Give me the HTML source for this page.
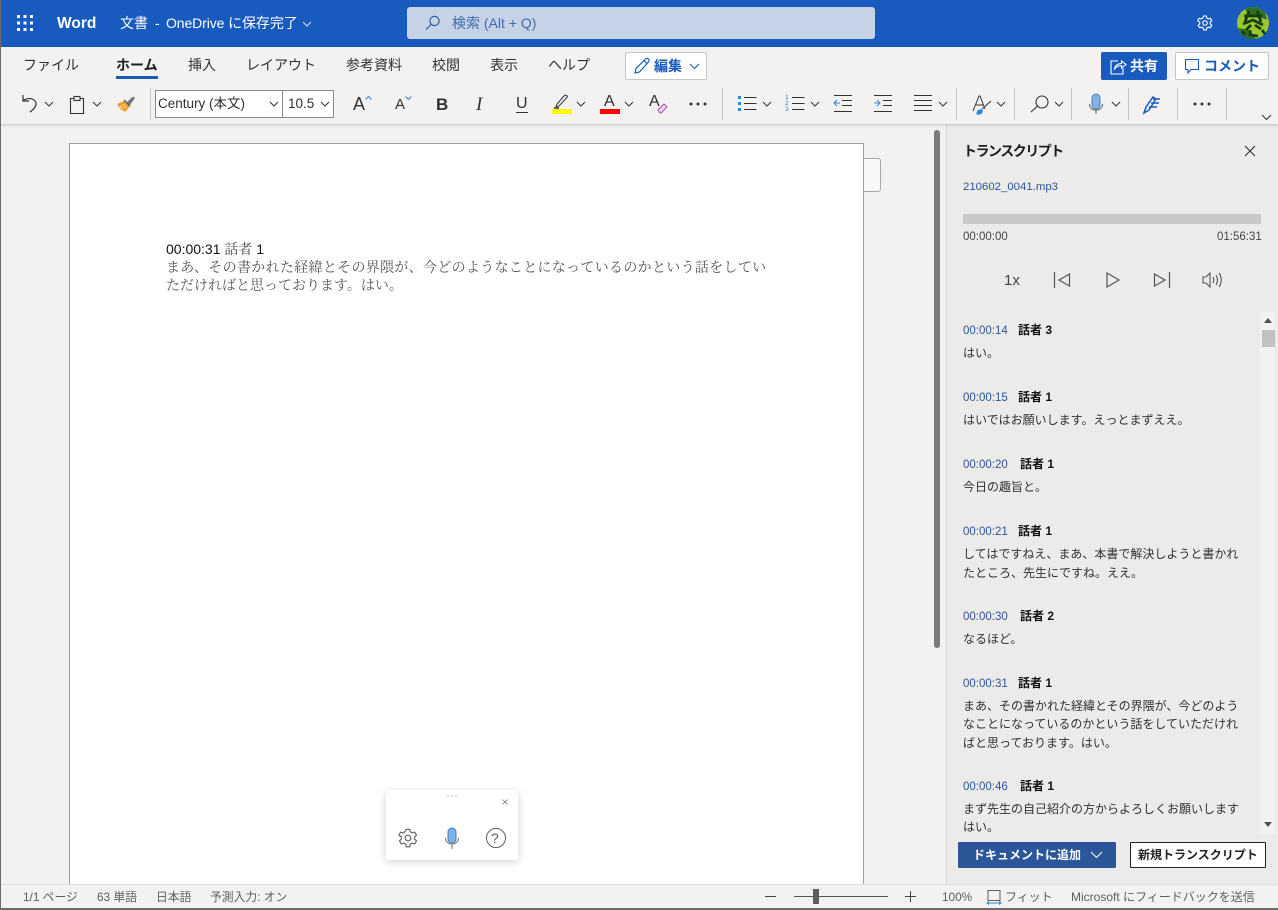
<!DOCTYPE html>
<html lang="ja"><head><meta charset="utf-8"><title>Word</title>
<style>
html,body{margin:0;padding:0;background:#f3f2f1}
body{width:1278px;height:910px;position:relative;overflow:hidden;font-family:"Liberation Sans","Noto Sans CJK JP",sans-serif;color:#323130}
.a{position:absolute;white-space:nowrap;line-height:1}
.b{position:absolute}
svg{position:absolute;overflow:visible}
.t{font-size:14px;color:#323130}
.sep{position:absolute;top:88px;width:1px;height:32px;background:#c8c6c4}
.ts{font-size:11.5px;color:#2b579a;margin-top:1px}
.sp{font-size:12px;color:#111;font-weight:bold}
.tx{font-size:12px;color:#323130}
.st{font-size:11.8px;color:#605e5c;margin-top:1px}
</style></head><body>
<!-- header -->
<div class="b" style="left:0;top:0;width:1278px;height:47px;background:#185abd"></div>
<svg style="left:17px;top:15px" width="16" height="16" fill="#fff"><rect x="0" y="0" width="3" height="3"/><rect x="6.5" y="0" width="3" height="3"/><rect x="13" y="0" width="3" height="3"/><rect x="0" y="6.5" width="3" height="3"/><rect x="6.5" y="6.5" width="3" height="3"/><rect x="13" y="6.5" width="3" height="3"/><rect x="0" y="13" width="3" height="3"/><rect x="6.5" y="13" width="3" height="3"/><rect x="13" y="13" width="3" height="3"/></svg>
<div class="a" style="left:57px;top:16px;font-size:15.5px;font-weight:bold;color:#fff">Word</div>
<div class="a" style="left:120px;top:16px;font-size:14px;color:#fff">文書</div>
<div class="a" style="left:155px;top:16px;font-size:14px;color:#fff">-</div>
<div class="a" style="left:166px;top:16px;font-size:14px;color:#fff;letter-spacing:-.1px">OneDrive に保存完了</div>
<svg style="left:302px;top:21px" width="10" height="6" fill="none" stroke="#dfe8f7"><path d="M1 1l4 4 4-4"/></svg>
<div class="b" style="left:407px;top:7px;width:468px;height:32px;background:#c6d3e6;border-radius:3px"></div>
<svg style="left:425px;top:15px" width="16" height="16" fill="none" stroke="#2b5ea8" stroke-width="1.2"><circle cx="9.5" cy="6" r="4.6"/><path d="M6 9.5L1 14.5"/></svg>
<div class="a" style="left:452px;top:16px;font-size:14px;color:#3d6bb0">検索 (Alt + Q)</div>
<svg style="left:1197px;top:15px" width="16" height="16" viewBox="0 0 16 16" fill="none" stroke="#fff" stroke-width="1.1"><path d="M6.6 1h2.8l.4 2 1.6.9 2-.6 1.400 2.400-1.500 1.400v1.800l1.500 1.400-1.400 2.400-2-.6-1.600.9-.4 2H6.600l-.4-2-1.600-.9-2 .6-1.400-2.400 1.500-1.400V7.100L.7 5.700l1.400-2.400 2 .6 1.600-.9z"/><circle cx="8" cy="8" r="2.300"/></svg>
<svg style="left:1237px;top:7px" width="32" height="32" viewBox="0 0 32 32"><circle cx="16" cy="16" r="16" fill="#9cc62c"/><path d="M8 2.100a16 16 0 0 1 20 3.400l2 7L12 8z" fill="#2f6f1f"/><path d="M1 21l12 2 6 9h-7A16 16 0 0 1 1 21z" fill="#2f6f1f"/><g fill="none" stroke="#143f12" stroke-width="2.800"><path d="M7 9h18M12 4l-4 11M20 4l4 11M6 17l10-4 10 5M14 18l-5 5M18 18l6 4M5 24l3 4M13 23v5l8 1M25 23l3 4"/></g></svg>
<!-- ribbon -->
<div class="b" style="left:0;top:47px;width:1278px;height:77px;background:#f3f2f1;box-shadow:0 1px 3px rgba(0,0,0,.2);z-index:1"></div>
<div style="position:absolute;left:0;top:0;width:1278px;height:125px;z-index:2">
<div class="a t" style="left:23px;top:58px">ファイル</div>
<div class="a t" style="left:116px;top:58px;font-weight:bold;color:#201f1e">ホーム</div>
<div class="b" style="left:116px;top:76px;width:42px;height:3px;background:#185abd"></div>
<div class="a t" style="left:188px;top:58px">挿入</div>
<div class="a t" style="left:246px;top:58px">レイアウト</div>
<div class="a t" style="left:346px;top:58px">参考資料</div>
<div class="a t" style="left:432px;top:58px">校閲</div>
<div class="a t" style="left:490px;top:58px">表示</div>
<div class="a t" style="left:548px;top:58px">ヘルプ</div>
<div class="b" style="left:625px;top:52px;width:80px;height:26px;background:#fff;border:1px solid #c8c6c4;border-radius:2px"></div>
<svg style="left:634px;top:57px" width="17" height="17" fill="none" stroke="#185abd" stroke-width="1.200"><path d="M1 16l1-4.500L11.500 2a1.700 1.700 0 0 1 3 3L5.500 15z"/><path d="M10 3.500l3 3"/></svg>
<div class="a" style="left:654px;top:59px;font-size:14px;font-weight:bold;color:#185abd">編集</div>
<svg style="left:689px;top:63px" width="11" height="7" fill="none" stroke="#185abd" stroke-width="1.100"><path d="M1 1l4.500 4.500L10 1"/></svg>
<div class="b" style="left:1101px;top:52px;width:66px;height:28px;background:#185abd;border-radius:2px"></div>
<svg style="left:1110px;top:58px" width="17" height="17" fill="none" stroke="#fff" stroke-width="1.100"><path d="M8 3H1v13h12v-6"/><path d="M4.500 11c.5-3.500 3.500-5.500 7-5.500V3L16 6.500 11.500 10V7.500c-3 0-5 1-7 3.500z"/></svg>
<div class="a" style="left:1130px;top:59px;font-size:14px;font-weight:bold;color:#fff">共有</div>
<div class="b" style="left:1175px;top:52px;width:92px;height:26px;background:#fff;border:1px solid #c8c6c4;border-radius:2px"></div>
<svg style="left:1185px;top:59px" width="15" height="15" fill="none" stroke="#185abd" stroke-width="1.100"><path d="M.5.500h13v10H6L3 14v-3.500H.5z"/></svg>
<div class="a" style="left:1204px;top:59px;font-size:14px;font-weight:bold;color:#185abd">コメント</div>
<!-- toolbar -->
<svg style="left:20px;top:94px" width="20" height="20" fill="none" stroke="#323130" stroke-width="1.200"><path d="M3 1v6h6"/><path d="M3 7c3-3 9-3.500 12 0 2.500 3 .5 7-5 11"/></svg>
<svg style="left:44px;top:101px" width="10" height="6" fill="none" stroke="#323130"><path d="M1 1l4 4 4-4"/></svg>
<svg style="left:70px;top:96px" width="15" height="18" fill="none" stroke="#323130" stroke-width="1.100"><path d="M4 2.500H.5v15h13v-15H10"/><rect x="4" y=".5" width="6" height="4" fill="#f3f2f1"/></svg>
<svg style="left:92px;top:101px" width="10" height="6" fill="none" stroke="#323130"><path d="M1 1l4 4 4-4"/></svg>
<svg style="left:117px;top:96px" width="18" height="16"><path d="M0 8l7-3 6 5-4 5.500C5 15.500 2 12 0 8z" fill="#f0a030"/><path d="M3 10l3 3M6 8l3 4" stroke="#fbe2b8"/><path d="M10 6l6-5.500 2 1.500-5 7z" fill="#797775"/><path d="M7 4l6 6" stroke="#605e5c" stroke-width="1.500"/></svg>
<div class="sep" style="left:150px"></div>
<div class="b" style="left:155px;top:90px;width:128px;height:28px;background:#fff;border:1px solid #8a8886;box-sizing:border-box"></div>
<div class="b" style="left:282px;top:90px;width:52px;height:28px;background:#fff;border:1px solid #8a8886;box-sizing:border-box"></div>
<div class="a" style="left:158px;top:97px;font-size:13.5px;color:#323130">Century (本文)</div>
<svg style="left:269px;top:101px" width="10" height="6" fill="none" stroke="#323130"><path d="M1 1l4 4 4-4"/></svg>
<div class="a" style="left:288px;top:97px;font-size:13.5px;color:#323130">10.5</div>
<svg style="left:320px;top:101px" width="10" height="6" fill="none" stroke="#323130"><path d="M1 1l4 4 4-4"/></svg>
<div class="a" style="left:353px;top:95px;font-size:18px;color:#323130">A</div>
<svg style="left:365px;top:96px" width="7" height="4" fill="none" stroke="#2b88d8"><path d="M.5 3.500l3-3 3 3"/></svg>
<div class="a" style="left:395px;top:97px;font-size:15px;color:#323130">A</div>
<svg style="left:405px;top:96px" width="7" height="4" fill="none" stroke="#2b88d8"><path d="M.5.500l3 3 3-3"/></svg>
<div class="a" style="left:436px;top:96px;font-size:17px;font-weight:bold;color:#323130">B</div>
<div class="a" style="left:476px;top:95px;font-size:19px;font-family:'Liberation Serif',serif;font-style:italic;color:#323130">I</div>
<div class="a" style="left:516px;top:96px;font-size:16px;color:#323130">U</div>
<div class="b" style="left:516px;top:112px;width:12px;height:1px;background:#323130"></div>
<svg style="left:553px;top:94px" width="18" height="15" fill="none" stroke="#323130"><path d="M3 13l1-3 7-8c2-2 4 0 3 1.500L6 12z"/><path d="M1 14h5" stroke="#605e5c" stroke-width="2"/></svg>
<div class="b" style="left:552px;top:109px;width:20px;height:5px;background:#ffff00"></div>
<svg style="left:576px;top:101px" width="10" height="6" fill="none" stroke="#323130"><path d="M1 1l4 4 4-4"/></svg>
<div class="a" style="left:604px;top:94px;font-size:16px;color:#323130">A</div>
<div class="b" style="left:600px;top:109px;width:20px;height:5px;background:#f00"></div>
<svg style="left:624px;top:101px" width="10" height="6" fill="none" stroke="#323130"><path d="M1 1l4 4 4-4"/></svg>
<div class="a" style="left:649px;top:94px;font-size:16px;color:#323130">A</div>
<svg style="left:657px;top:103px" width="11" height="11" fill="#f3d9f3" stroke="#b146c2"><path d="M1 7l6-6 3 3-6 6H3z"/></svg>
<svg style="left:689px;top:102px" width="18" height="4" fill="#323130"><circle cx="2" cy="2" r="1.500"/><circle cx="9" cy="2" r="1.500"/><circle cx="16" cy="2" r="1.500"/></svg>
<div class="sep" style="left:722px"></div>
<svg style="left:738px;top:96px" width="19" height="16"><rect x="0" y="0" width="3" height="3" fill="#2b88d8"/><rect x="0" y="6" width="3" height="3" fill="#2b88d8"/><rect x="0" y="12" width="3" height="3" fill="#2b88d8"/><path d="M6 1.500h12.500M6 7.500h12.500M6 13.500h12.500" stroke="#323130"/></svg>
<svg style="left:762px;top:101px" width="10" height="6" fill="none" stroke="#323130"><path d="M1 1l4 4 4-4"/></svg>
<div class="a" style="left:785px;top:95px;font-size:6.500px;color:#2b88d8;line-height:6px;white-space:normal;width:6px">1<br>2<br>3</div>
<svg style="left:792px;top:96px" width="13" height="16"><path d="M0 1.500h12.500M0 7.500h12.500M0 13.500h12.500" stroke="#323130"/></svg>
<svg style="left:810px;top:101px" width="10" height="6" fill="none" stroke="#323130"><path d="M1 1l4 4 4-4"/></svg>
<svg style="left:834px;top:95px" width="19" height="18" fill="none" stroke="#323130"><path d="M0 .5h18M8 5.500h10M8 10.500h10M0 16.500h18"/><path d="M6 8H0M3 5L0 8l3 3" stroke="#2b88d8"/></svg>
<svg style="left:874px;top:95px" width="19" height="18" fill="none" stroke="#323130"><path d="M0 .5h18M9 5.500h9M9 10.500h9M0 16.500h18"/><path d="M0 8h6M3 5l3 3-3 3" stroke="#2b88d8"/></svg>
<svg style="left:914px;top:95px" width="19" height="17" fill="none" stroke="#323130"><path d="M0 .5h18M0 5.500h18M0 10.500h18M0 15.500h18"/></svg>
<svg style="left:938px;top:101px" width="10" height="6" fill="none" stroke="#323130"><path d="M1 1l4 4 4-4"/></svg>
<div class="sep" style="left:956px"></div>
<svg style="left:973px;top:95px" width="20" height="20" fill="none" stroke="#323130"><path d="M0 16L6 1h1l5 13M3 10h7"/><path d="M4 19c0-3 2-5 5-4 1 3-2 5-5 4z" fill="#2b88d8" stroke="#2b88d8"/><path d="M9 14L18 6" stroke="#605e5c" stroke-width="1.400"/></svg>
<svg style="left:996px;top:101px" width="10" height="6" fill="none" stroke="#323130"><path d="M1 1l4 4 4-4"/></svg>
<div class="sep" style="left:1014px"></div>
<svg style="left:1030px;top:95px" width="20" height="18" fill="none" stroke="#323130" stroke-width="1.100"><circle cx="12" cy="7" r="6"/><path d="M7.500 11L1 17"/></svg>
<svg style="left:1054px;top:101px" width="10" height="6" fill="none" stroke="#323130"><path d="M1 1l4 4 4-4"/></svg>
<div class="sep" style="left:1071px"></div>
<svg style="left:1089px;top:94px" width="14" height="20"><rect x="3" y="0" width="8" height="15" rx="4" fill="#7fb2e5" stroke="#4a86c8"/><path d="M.5 10c0 8 13 8 13 0M7 16v4" fill="none" stroke="#797775" stroke-width="1.200"/></svg>
<svg style="left:1111px;top:101px" width="10" height="6" fill="none" stroke="#323130"><path d="M1 1l4 4 4-4"/></svg>
<div class="sep" style="left:1128px"></div>
<svg style="left:1143px;top:95px" width="20" height="20" fill="none" stroke="#185abd" stroke-width="1.500"><path d="M1 18l2-6 7-10 3 2-7 11z"/><path d="M10 4h7M8 8h8M6 12h8"/></svg>
<div class="sep" style="left:1177px"></div>
<svg style="left:1193px;top:102px" width="18" height="4" fill="#323130"><circle cx="2" cy="2" r="1.500"/><circle cx="9" cy="2" r="1.500"/><circle cx="16" cy="2" r="1.500"/></svg>
<div class="sep" style="left:1226px"></div>
<svg style="left:1261px;top:114px" width="11" height="7" fill="none" stroke="#323130"><path d="M1 1l4.500 4.500L10 1"/></svg>
</div>
<!-- doc area -->
<div class="b" style="left:862px;top:158px;width:17px;height:32px;background:#f8f8f8;border:1px solid #a8a8a8;border-radius:0 3px 3px 0"></div>
<div class="b" style="left:69px;top:143px;width:793px;height:741px;background:#fff;border:1px solid #a0a0a0;border-bottom:0"></div>
<div class="a" style="left:166px;top:242px;font-size:14px;color:#111">00:00:31 <span style="font-family:'Noto Serif CJK SC',serif;color:#444">話者</span> 1</div>
<div class="a" style="left:166px;top:260px;font-size:14px;font-family:'Noto Serif CJK SC',serif;color:#555;letter-spacing:.31px">まあ、その書かれた経緯とその界隈が、今どのようなことになっているのかという話をしてい</div>
<div class="a" style="left:166px;top:278px;font-size:14px;font-family:'Noto Serif CJK SC',serif;color:#555">ただければと思っております。はい。</div>
<div class="b" style="left:934px;top:130px;width:6px;height:518px;background:#7a7a7a;border-radius:3px"></div>
<div class="b" style="left:386px;top:790px;width:132px;height:70px;background:#fff;border-radius:2px;box-shadow:0 2px 8px rgba(0,0,0,.18)"></div>
<svg style="left:447px;top:795px" width="10" height="2" fill="#b0b0b0"><circle cx="1" cy="1" r=".7"/><circle cx="5" cy="1" r=".7"/><circle cx="9" cy="1" r=".7"/></svg>
<svg style="left:502px;top:799px" width="6" height="6" stroke="#777" stroke-width=".8"><path d="M.5.500l5 5M5.500.500l-5 5"/></svg>
<svg style="left:398px;top:828px" width="20" height="20" viewBox="0 0 16 16" fill="none" stroke="#605e5c" stroke-width=".9"><path d="M6.600 1h2.800l.4 2 1.600.9 2-.6 1.400 2.400-1.500 1.400v1.800l1.500 1.400-1.400 2.400-2-.6-1.600.9-.4 2H6.600l-.4-2-1.600-.9-2 .6-1.400-2.400 1.500-1.400V7.100L.7 5.700l1.400-2.400 2 .6 1.600-.9z"/><circle cx="8" cy="8" r="2.300"/></svg>
<svg style="left:445px;top:828px" width="14" height="21"><rect x="3" y="0" width="8" height="15" rx="4" fill="#7fb2e5" stroke="#3f7fc4"/><path d="M.5 10c0 8 13 8 13 0M7 16v5" fill="none" stroke="#8a8886" stroke-width="1.200"/></svg>
<svg style="left:486px;top:828px" width="20" height="20"><circle cx="10" cy="10" r="9.500" fill="none" stroke="#605e5c"/></svg>
<div class="a" style="left:491px;top:831px;font-size:14px;color:#605e5c">?</div>
<!-- panel -->
<div class="b" style="left:946px;top:124px;width:332px;height:760px;background:#edebe9;border-left:1px solid #d6d4d2;box-sizing:border-box"></div>
<div class="a" style="left:963px;top:144px;font-size:14px;font-weight:bold;color:#201f1e;letter-spacing:-1.500px">トランスクリプト</div>
<svg style="left:1244px;top:145px" width="12" height="12" stroke="#323130" stroke-width="1.100"><path d="M1 1l10 10M11 1L1 11"/></svg>
<div class="a" style="left:963px;top:182px;font-size:11.4px;color:#2b579a">210602_0041.mp3</div>
<div class="b" style="left:963px;top:214px;width:298px;height:10px;background:#c8c8c8"></div>
<div class="a" style="left:963px;top:232px;font-size:11.5px;color:#444">00:00:00</div>
<div class="a" style="left:1217px;top:232px;font-size:11.5px;color:#444">01:56:31</div>
<div class="a" style="left:1004px;top:273px;font-size:15px;color:#444">1x</div>
<svg style="left:1053px;top:272px" width="18" height="16" fill="none" stroke="#555" stroke-width="1.200"><path d="M1.500 0v16M16.500 2v12L6 8z"/></svg>
<svg style="left:1106px;top:272px" width="14" height="16" fill="none" stroke="#555" stroke-width="1.200"><path d="M1 1v14l12-7z"/></svg>
<svg style="left:1153px;top:272px" width="18" height="16" fill="none" stroke="#555" stroke-width="1.200"><path d="M16.500 0v16M1.500 2v12L12 8z"/></svg>
<svg style="left:1202px;top:271px" width="21" height="18" fill="none" stroke="#555" stroke-width="1.100"><path d="M1 6v6h3l4 4V2L4 6zM11 6c1 2 1 4 0 6M14 4c2 3 2 7 0 10M17 2c3 4 3 10 0 14"/></svg>
<div class="b" style="left:1260px;top:312px;width:15px;height:522px;background:#f1f1f1"></div>
<svg style="left:1264px;top:318px" width="8" height="5" fill="#505050"><path d="M4 0l4 5H0z"/></svg>
<svg style="left:1264px;top:822px" width="8" height="5" fill="#505050"><path d="M0 0h8L4 5z"/></svg>
<div class="b" style="left:1262px;top:330px;width:13px;height:17px;background:#c1c1c1"></div>
<div class="a ts" style="left:963px;top:325px">00:00:14</div><div class="a sp" style="left:1018px;top:324px">話者 3</div><div class="a tx" style="left:963px;top:347px">はい。</div>
<div class="a ts" style="left:963px;top:392px">00:00:15</div><div class="a sp" style="left:1018px;top:391px">話者 1</div><div class="a tx" style="left:963px;top:414px">はいではお願いします。えっとまずええ。</div>
<div class="a ts" style="left:963px;top:459px">00:00:20</div><div class="a sp" style="left:1020px;top:458px">話者 1</div><div class="a tx" style="left:963px;top:481px">今日の趣旨と。</div>
<div class="a ts" style="left:963px;top:526px">00:00:21</div><div class="a sp" style="left:1018px;top:525px">話者 1</div><div class="a tx" style="left:963px;top:548px">してはですねえ、まあ、本書で解決しようと書かれ</div><div class="a tx" style="left:963px;top:567px">たところ、先生にですね。ええ。</div>
<div class="a ts" style="left:963px;top:611px">00:00:30</div><div class="a sp" style="left:1020px;top:610px">話者 2</div><div class="a tx" style="left:963px;top:633px">なるほど。</div>
<div class="a ts" style="left:963px;top:678px">00:00:31</div><div class="a sp" style="left:1018px;top:677px">話者 1</div><div class="a tx" style="left:963px;top:700px">まあ、その書かれた経緯とその界隈が、今どのよう</div><div class="a tx" style="left:963px;top:718px">なことになっているのかという話をしていただけれ</div><div class="a tx" style="left:963px;top:737px">ばと思っております。はい。</div>
<div class="a ts" style="left:963px;top:781px">00:00:46</div><div class="a sp" style="left:1020px;top:780px">話者 1</div><div class="a tx" style="left:963px;top:803px">まず先生の自己紹介の方からよろしくお願いします</div><div class="a tx" style="left:963px;top:821px">はい。</div>
<div class="b" style="left:958px;top:842px;width:158px;height:26px;background:#2b579a;border-radius:1px"></div>
<div class="a" style="left:973px;top:849px;font-size:12px;font-weight:bold;color:#fff">ドキュメントに追加</div>
<svg style="left:1090px;top:851px" width="13" height="8" fill="none" stroke="#fff" stroke-width="1.100"><path d="M1 1l5.500 5.500L12 1"/></svg>
<div class="b" style="left:1130px;top:842px;width:134px;height:24px;background:#fff;border:1px solid #222;border-radius:1px"></div>
<div class="a" style="left:1138px;top:849px;font-size:12px;font-weight:bold;color:#222">新規トランスクリプト</div>
<!-- status -->
<div class="b" style="left:0;top:884px;width:1278px;height:25px;background:#f3f2f1;border-top:1px solid #e1dfdd;box-sizing:border-box"></div>
<div class="a st" style="left:23px;top:891px">1/1 ページ</div>
<div class="a st" style="left:97px;top:891px">63 単語</div>
<div class="a st" style="left:156px;top:891px">日本語</div>
<div class="a st" style="left:210px;top:891px">予測入力: オン</div>
<div class="b" style="left:765px;top:896px;width:11px;height:1px;background:#444"></div>
<div class="b" style="left:794px;top:896px;width:94px;height:1px;background:#555"></div>
<div class="b" style="left:813px;top:889px;width:6px;height:15px;background:#605e5c"></div>
<div class="b" style="left:905px;top:896px;width:11px;height:1px;background:#444"></div>
<div class="b" style="left:910px;top:891px;width:1px;height:11px;background:#444"></div>
<div class="a st" style="left:942px;top:891px">100%</div>
<svg style="left:987px;top:890px" width="14" height="15" fill="none"><path d="M1 .5h12v10H1z" stroke="#605e5c"/><path d="M0 13h14M2 11.500L0 13l2 1.500M12 11.500l2 1.500-2 1.500" stroke="#2b88d8"/></svg>
<div class="a" style="left:1005px;top:891px;font-size:12px;color:#605e5c">フィット</div>
<div class="a" style="left:1071px;top:891px;font-size:12px;color:#605e5c">Microsoft にフィードバックを送信</div>
<!-- window edges -->
<div class="b" style="left:0;top:0;width:1px;height:910px;background:#6b6b6b;z-index:5"></div>
<div class="b" style="left:0;top:908px;width:1278px;height:2px;background:#6b6b6b;z-index:5"></div>
</body></html>
